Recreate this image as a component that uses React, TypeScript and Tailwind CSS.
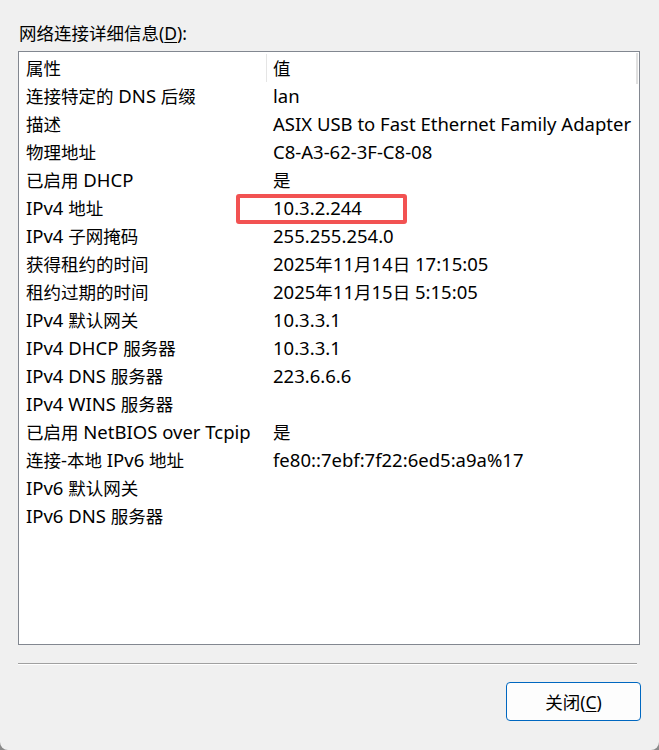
const rows: [string, string][] = [
  ["连接特定的 DNS 后缀", "lan"],
  ["描述", "ASIX USB to Fast Ethernet Family Adapter"],
  ["物理地址", "C8-A3-62-3F-C8-08"],
  ["已启用 DHCP", "是"],
  ["IPv4 地址", "10.3.2.244"],
  ["IPv4 子网掩码", "255.255.254.0"],
  ["获得租约的时间", "2025年11月14日 17:15:05"],
  ["租约过期的时间", "2025年11月15日 5:15:05"],
  ["IPv4 默认网关", "10.3.3.1"],
  ["IPv4 DHCP 服务器", "10.3.3.1"],
  ["IPv4 DNS 服务器", "223.6.6.6"],
  ["IPv4 WINS 服务器", ""],
  ["已启用 NetBIOS over Tcpip", "是"],
  ["连接-本地 IPv6 地址", "fe80::7ebf:7f22:6ed5:a9a%17"],
  ["IPv6 默认网关", ""],
  ["IPv6 DNS 服务器", ""],
]

// latin runs are a bit wider in the original UI font, so bump them up
function Mixed({ text }: { text: string }) {
  const parts = text.split(/([\u4e00-\u9fff]+)/).filter(Boolean)
  return (
    <>
      {parts.map((p, i) =>
        /[\u4e00-\u9fff]/.test(p) ? (
          <span key={i}>{p}</span>
        ) : (
          <span key={i} className="text-[18.5px]">{p}</span>
        )
      )}
    </>
  )
}

export default function App() {
  return (
    <div className="w-[659px] h-[750px] bg-[#8a8a8a]">
      <div
        className="relative w-[659px] h-[750px] bg-[#f0f0f0] rounded-b-[8px] text-black text-[17.5px] leading-[24px]"
        style={{ fontFamily: '"Noto Sans", "Noto Sans CJK SC", sans-serif' }}
      >
        {/* label */}
        <div className="pt-[21px] pl-[19px]">
          网络连接详细信息(<span className="underline underline-offset-2">D</span>):
        </div>

        {/* list view */}
        <div className="relative mt-[6px] ml-[18px] w-[622px] h-[594px] border border-[#828790] bg-white pt-[2px]">
          <div className="flex h-[28px] items-center">
            <div className="w-[248px] pl-[7px] h-full flex items-center border-r border-[#e5e5e5]">属性</div>
            <div className="pl-[6px]">值</div>
          </div>
          {rows.map(([k, v]) => (
            <div key={k} className="flex h-[28px] items-center">
              <div className="w-[248px] pl-[7px] whitespace-nowrap">
                <Mixed text={k} />
              </div>
              <div className="pl-[6px] whitespace-nowrap">
                <Mixed text={v} />
              </div>
            </div>
          ))}
          {/* scrollbar hint */}
          <div className="absolute right-[1px] top-[1px] w-[2px] h-[31px] bg-[#e0e0e0]" />
        </div>

        {/* separator */}
        <div className="mt-[18px] ml-[18px] w-[619px] h-[1px] bg-[#a0a0a0]" />
        <div className="ml-[18px] w-[619px] h-[1px] bg-white" />

        {/* button */}
        <div className="flex justify-end pr-[18px] mt-[17px]">
          <button className="w-[135px] h-[39px] border border-[#0067c0] rounded-[4px] bg-[#fdfdfd] flex items-center justify-center">
            关闭(<span className="underline underline-offset-2">C</span>)
          </button>
        </div>

        {/* highlight */}
        <div className="absolute left-[236px] top-[194px] w-[171px] h-[30px] border-[4px] border-[#f25252] rounded-[3px]" />
      </div>
    </div>
  )
}
